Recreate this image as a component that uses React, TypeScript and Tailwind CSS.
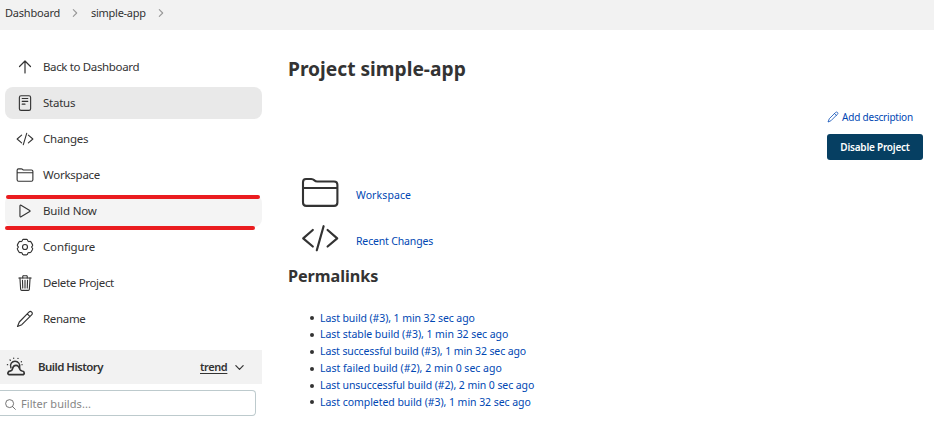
import React from "react";
import {
  IoReaderOutline, IoCodeSlashOutline, IoFolderOutline, IoPlayOutline,
  IoTrashOutline, IoSearchOutline,
  IoChevronForwardOutline, IoChevronDownOutline,
} from "react-icons/io5";

type IconProps = { className?: string };

function ArrowUp({ className }: IconProps) {
  return (
    <svg className={className} viewBox="0 0 18 18" fill="none" stroke="currentColor" strokeWidth="1.2" strokeLinecap="round" strokeLinejoin="round">
      <path d="M3.500 8.500 9 3l5.500 5.500M9 3.300v11.700" />
    </svg>
  );
}

function Gear({ className }: IconProps) {
  return (
    <svg className={className} viewBox="0 0 18 18" fill="none" stroke="currentColor" strokeWidth="1.150" strokeLinecap="round" strokeLinejoin="round">
      <path d="M7.300 1.300h3.400q1 .3 1 1.300.5 1.200 1.800.9 1.100-.3 1.700.8l1.300 2.300q.5 1-.3 1.600-1 .8 0 1.700.8.6.3 1.600l-1.300 2.300q-.6 1.100-1.700.8-1.300-.3-1.800.9 0 1-1 1.300H7.300q-1-.3-1-1.300-.5-1.200-1.800-.9-1.100.3-1.700-.8L1.500 11.500q-.5-1 .3-1.600 1-.9 0-1.700-.8-.6-.3-1.600L2.800 4.300q.6-1.100 1.700-.8 1.300.3 1.800-.9 0-1 1-1.300Z" />
      <circle cx="9" cy="9" r="2.500" />
    </svg>
  );
}

function Pencil({ className }: IconProps) {
  return (
    <svg className={className} viewBox="0 0 18 18" fill="none" stroke="currentColor" strokeWidth="1.150" strokeLinecap="round" strokeLinejoin="round">
      <path d="M12.900 2.200c1-1 2-.900 2.800-.100s.9 1.800-.100 2.800L5.800 14.700l-4.300 1.800 1.800-4.500ZM11.300 3.900l2.700 2.700" />
    </svg>
  );
}

function LargeFolder() {
  return (
    <svg className="size-[38px]" viewBox="0 0 38 38" fill="none" stroke="#333" strokeWidth="2.100" strokeLinejoin="round">
      <path d="M2 29.500V9.200c0-2 1.200-3.200 3-3.200h5.200c1.500 0 2.300.500 3.300 1.400.8.800 1.600 1.100 2.800 1.100H33c2.100 0 3.400 1.200 3.400 3.200v17.800c0 2-1.300 3.400-3.300 3.400H5.300c-2 0-3.300-1.400-3.300-3.400Z" />
      <path d="M2 15h34.400" strokeWidth="1.800" />
    </svg>
  );
}

function LargeCode() {
  return (
    <svg className="size-[38px]" viewBox="0 0 38 38" fill="none" stroke="#333" strokeWidth="2.200" strokeLinecap="round" strokeLinejoin="round">
      <path d="M11.800 11 2.200 19.300l9.600 8.200M26.600 11l9.600 8.300-9.600 8.200M22.600 7.200 15.800 31.300" />
    </svg>
  );
}

function Weather() {
  return (
    <svg className="h-5 w-5" viewBox="0 0 20 20" fill="none" stroke="#333" strokeWidth="1.7" strokeLinecap="round" strokeLinejoin="round">
      <path d="M3.300 17.700h13.300c2.200 0 2.300-3.400-.5-3.700-1.500-.2-1.800-.6-2.200-1.700C13.200 9.700 12 8.300 10 8.300S6.900 9.800 6.400 12.100c-.3 1.200-.7 1.700-1.800 1.800-3.400.3-3.400 3.600-1.300 3.800Z" />
      <path d="M4.900 10.800C3.500 7 6 4.300 9 4.300c3.100 0 5.600 2.700 4.600 6.300" strokeWidth="1.500" />
      <path d="M4 2.900l.3.300M7.700 1.200v.1M12 1.300v.1M15.300 4.800l.1-.1M1.400 7.700h.2M16 7.700h.1" strokeWidth="1.300" />
    </svg>
  );
}

const tasks = [
  { label: "Back to Dashboard", Icon: ArrowUp, bg: "", fit: "tracking-[-0.36px]" },
  { label: "Status", Icon: IoReaderOutline, bg: "bg-[#e9e9e9]", fit: "tracking-[-0.25px]" },
  { label: "Changes", Icon: IoCodeSlashOutline, bg: "", fit: "tracking-[-0.24px]" },
  { label: "Workspace", Icon: IoFolderOutline, bg: "", fit: "tracking-[-0.25px]" },
  { label: "Build Now", Icon: IoPlayOutline, bg: "bg-[#f4f4f4]", fit: "tracking-[-0.15px]" },
  { label: "Configure", Icon: Gear, bg: "", fit: "tracking-[-0.15px]" },
  { label: "Delete Project", Icon: IoTrashOutline, bg: "", fit: "tracking-[-0.33px]" },
  { label: "Rename", Icon: Pencil, bg: "", fit: "tracking-[-0.33px]" },
];

const permalinks = [
  { text: "Last build (#3), 1 min 32 sec ago", fit: "tracking-[-0.09px]" },
  { text: "Last stable build (#3), 1 min 32 sec ago", fit: "tracking-[-0.05px]" },
  { text: "Last successful build (#3), 1 min 32 sec ago", fit: "tracking-[-0.11px]" },
  { text: "Last failed build (#2), 2 min 0 sec ago", fit: "" },
  { text: "Last unsuccessful build (#2), 2 min 0 sec ago", fit: "tracking-[-0.08px]" },
  { text: "Last completed build (#3), 1 min 32 sec ago", fit: "tracking-[-0.05px]" },
];

export default function App() {
  return (
    <div className="relative h-[422px] w-[934px] overflow-hidden bg-white font-['Noto_Sans',sans-serif] text-[12px] text-[#333]">
      <header className="flex h-[30px] items-start bg-[#f2f2f2] pl-[5px] pt-[5px] text-[11px] leading-4">
        <span className="w-[55px] whitespace-nowrap tracking-[-0.2px]">Dashboard</span>
        <IoChevronForwardOutline className="ml-[9px] mt-[2px] size-[12px] text-[#999]" />
        <span className="ml-[10px] w-[55px] whitespace-nowrap tracking-[-0.27px]">simple-app</span>
        <IoChevronForwardOutline className="ml-[9px] mt-[2px] size-[12px] text-[#999]" />
      </header>
      <div className="flex">
        <aside className="w-[262px] shrink-0 pt-[21px]">
          <nav className="flex flex-col gap-1 pl-[5px]">
            {tasks.map(({ label, Icon, bg, fit }) => (
              <div key={label} className={`flex h-8 items-center rounded-[8px] pl-[11px] ${bg}`}>
                <Icon className="size-[18px]" />
                <span className={`ml-[9px] whitespace-nowrap text-[11.500px] ${fit}`}>{label}</span>
              </div>
            ))}
          </nav>
          <div className="mt-[15px] flex h-[34px] items-center bg-[#f2f2f2] pl-[6px]">
            <Weather />
            <span className="ml-3 w-[162px] text-[11.500px] font-semibold tracking-[-0.560px]">Build History</span>
            <span className="w-[27px] text-[11px] font-semibold tracking-[-0.4px] underline underline-offset-2">trend</span>
            <IoChevronDownOutline className="ml-[6px] size-[13px]" />
          </div>
          <div className="mt-[6px] flex h-[26px] w-[256px] items-center rounded-r-[4px] border border-l-0 border-[#bdcacd] pl-1 pt-[2px] text-[#868686]">
            <IoSearchOutline className="size-[13px] text-[#555]" />
            <span className="ml-1 mt-px text-[11px] tracking-[0.05px]">Filter builds...</span>
          </div>
        </aside>
        <main className="flex-1 pl-[26px] pt-[24px]">
          <h1 className="h-[30px] text-[19.200px] font-bold leading-[30px]">Project simple-app</h1>
          <div className="mt-[25px] flex flex-col items-end pr-[11px]">
            <div className="flex h-4 w-[96px] items-center text-[10px] text-[#0047b3]">
              <Pencil className="size-[12px]" />
              <span className="ml-[3px] mt-px whitespace-nowrap tracking-[-0.2px]">Add description</span>
            </div>
            <button className="mt-[9px] h-[26px] w-[96px] rounded-[3px] bg-[#063f62] pt-px text-[10px] font-semibold tracking-[-0.22px] text-white">Disable Project</button>
          </div>
          <div className="mt-[9px] flex flex-col text-[10.500px] text-[#0047b3]">
            <div className="flex h-[46px] items-center pl-[13px]">
              <LargeFolder />
              <span className="ml-[17px] mt-[8px] tracking-[0.1px]">Workspace</span>
            </div>
            <div className="flex h-[46px] items-center pl-[13px]">
              <LargeCode />
              <span className="ml-[17px] mt-[8px] tracking-[-0.16px]">Recent Changes</span>
            </div>
          </div>
          <h2 className="mt-[3px] h-6 text-[16.200px] font-bold leading-6 tracking-[-0.05px]">Permalinks</h2>
          <ul className="mt-[22px] flex flex-col text-[10.500px] text-[#0047b3]">
            {permalinks.map(({ text, fit }) => (
              <li key={text} className="flex h-[16.800px] items-center pl-[22px]">
                <span className="size-1 rounded-full bg-[#333]" />
                <span className={`ml-[6px] whitespace-nowrap ${fit}`}>{text}</span>
              </li>
            ))}
          </ul>
        </main>
      </div>
      <div className="absolute left-[6px] top-[195px] h-1 w-[254px] rounded-full bg-[#ea1c1f]" />
      <div className="absolute left-[5px] top-[226px] h-1 w-[250px] rounded-full bg-[#ea1c1f]" />
    </div>
  );
}
